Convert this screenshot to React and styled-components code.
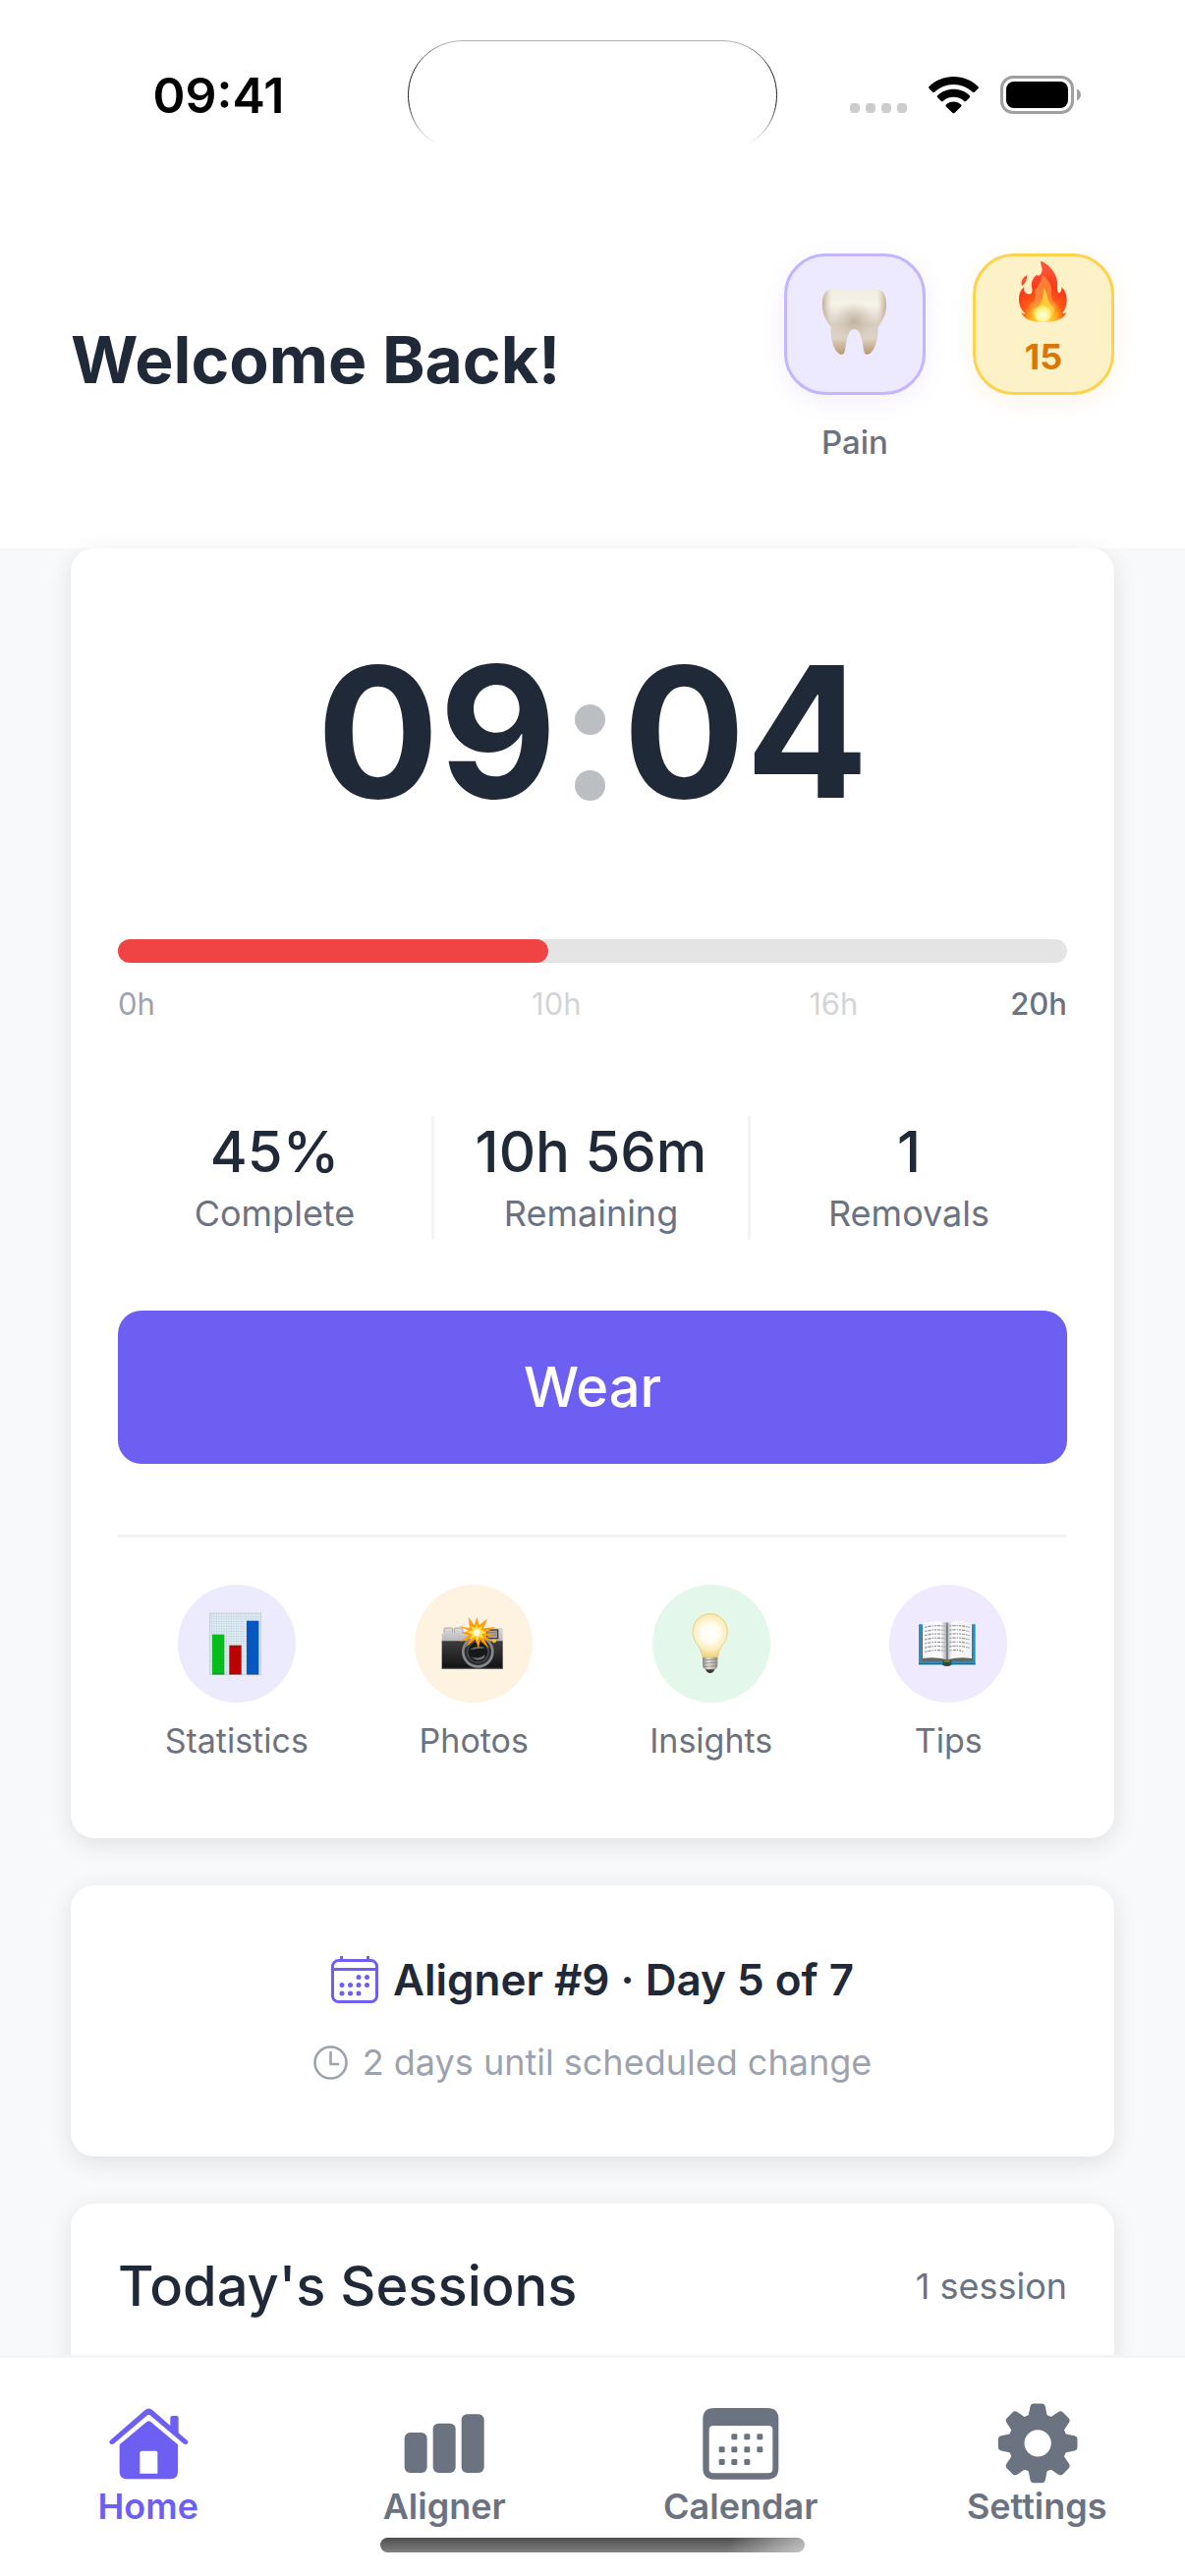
import React from "react";
import styled, { createGlobalStyle } from "styled-components";

const color = {
  ink: "#1f2937",
  slate: "#6b7280",
  mute: "#9ca3af",
  faint: "#d4d4d4",
  line: "#f3f4f6",
  page: "#f8f9fb",
  brand: "#6c5ff2",
};

const GlobalStyle = createGlobalStyle`
  *, *::before, *::after { box-sizing: border-box; }
  body {
    margin: 0;
    font-family: Inter, "Liberation Sans", sans-serif;
    color: ${color.ink};
    background: ${color.page};
  }
  h1, h2, p { margin: 0; }
  button { font: inherit; border: 0; cursor: pointer; }
  svg { display: block; flex: none; }
`;

const Screen = styled.div`
  display: flex;
  flex-direction: column;
  height: 100vh;
  background: ${color.page};
`;

const Content = styled.main`
  flex: 1;
  min-height: 0;
  overflow: hidden;
`;

/* Status bar */
const StatusBar = styled.div`
  display: grid;
  grid-template-columns: 1fr 376px 1fr;
  align-items: center;
  padding: 41px 0 34px;
  background: #ffffff;
`;

const Clock = styled.time`
  padding-left: 30px;
  text-align: center;
  font-size: 50px;
  line-height: 60px;
  font-weight: 600;
  color: #000000;
`;

const Indicators = styled.div`
  display: flex;
  justify-content: center;
  align-items: flex-end;
  gap: 22px;
  padding-right: 32px;
`;

/* Header */
const Header = styled.header`
  display: flex;
  align-items: center;
  justify-content: space-between;
  padding: 72px 72px 84px;
  background: #ffffff;
`;

const Title = styled.h1`
  font-size: 66px;
  line-height: 84px;
  font-weight: 700;
`;

const HeaderActions = styled.div`
  display: flex;
  align-items: flex-start;
  gap: 48px;
`;

const BadgeColumn = styled.div`
  display: flex;
  flex-direction: column;
  align-items: center;
  gap: 24px;
`;

const BadgeButton = styled.button`
  display: flex;
  flex-direction: column;
  align-items: center;
  justify-content: ${(p) => (p.$stacked ? "flex-start" : "center")};
  gap: 10px;
  width: 144px;
  height: 144px;
  padding: 0;
  border: 3px solid ${(p) => p.$edge};
  border-radius: 42px;
  background: ${(p) => p.$fill};
  box-shadow: 0 6px 24px ${(p) => p.$glow};
`;

const BadgeCount = styled.span`
  font-size: 36px;
  line-height: 48px;
  font-weight: 700;
  color: #d97706;
`;

const BadgeLabel = styled.label`
  font-size: 33px;
  line-height: 48px;
  font-weight: 500;
  color: ${color.slate};
`;

/* Cards */
const Stack = styled.div`
  display: flex;
  flex-direction: column;
  gap: 48px;
  padding: 0 72px;
`;

const Card = styled.section`
  padding: ${(p) => p.$pad || "48px"};
  border-radius: 24px;
  background: #ffffff;
  box-shadow: 0 6px 24px rgba(0, 0, 0, 0.1);
`;

const Timer = styled.div`
  display: flex;
  justify-content: center;
  align-items: center;
  gap: 18px;
  padding: 24px 0 96px;
  font-size: 185px;
  line-height: 230px;
  font-weight: 700;
`;

const Colon = styled.span`
  display: flex;
  flex-direction: column;
  gap: 36px;
  padding-top: 42px;
`;

const ColonDot = styled.i`
  width: 31px;
  height: 31px;
  border-radius: 50%;
  background: #bbbfc4;
`;

const Track = styled.div`
  height: 24px;
  border-radius: 12px;
  background: #e4e4e4;
`;

const Fill = styled.div`
  height: 100%;
  border-radius: 12px;
  background: #f04444;
`;

const Scale = styled.div`
  display: grid;
  grid-template-columns: 421fr 282fr 205fr auto;
  margin-top: 24px;
  font-size: 31px;
  line-height: 36px;
`;

const Tick = styled.span`
  font-weight: ${(p) => (p.$strong ? 500 : 400)};
  color: ${(p) => p.$tone};
`;

const Stats = styled.div`
  display: grid;
  grid-template-columns: repeat(3, 1fr);
  margin-top: 96px;
`;

const Stat = styled.div`
  text-align: center;
  &:not(:last-child) { border-right: 3px solid ${color.line}; }
`;

const StatValue = styled.div`
  font-size: 58px;
  line-height: 72px;
  font-weight: 500;
`;

const StatLabel = styled.div`
  font-size: 36px;
  line-height: 54px;
  color: ${color.slate};
`;

const WearButton = styled.button`
  display: block;
  width: 100%;
  margin-top: 72px;
  padding: 42px;
  border-radius: 24px;
  background: ${color.brand};
  color: #ffffff;
  && { font-size: 56px; line-height: 72px; font-weight: 500; }
`;

const Shortcuts = styled.nav`
  display: grid;
  grid-template-columns: repeat(4, 1fr);
  margin-top: 72px;
  padding: 48px 0 24px;
  border-top: 3px solid ${color.line};
`;

const Shortcut = styled.a`
  display: flex;
  flex-direction: column;
  align-items: center;
  gap: 12px;
  color: ${color.slate};
  font-size: 34px;
  line-height: 54px;
  text-decoration: none;
`;

const Disc = styled.span`
  display: grid;
  place-items: center;
  width: 120px;
  height: 120px;
  border-radius: 50%;
  background: ${(p) => p.$fill};
`;

const AlignerTitle = styled.h2`
  display: flex;
  justify-content: center;
  align-items: center;
  gap: 15px;
  font-size: 44px;
  line-height: 60px;
  font-weight: 600;
`;

const AlignerNote = styled.p`
  display: flex;
  justify-content: center;
  align-items: center;
  gap: 15px;
  margin-top: 24px;
  font-size: 36px;
  line-height: 60px;
  color: ${color.mute};
`;

const SessionsHead = styled.div`
  display: flex;
  justify-content: space-between;
  align-items: center;
`;

const SessionsTitle = styled.h2`
  font-size: 56px;
  line-height: 72px;
  font-weight: 500;
`;

const SessionsCount = styled.span`
  font-size: 36px;
  line-height: 48px;
  color: ${color.slate};
`;

/* Tab bar */
const TabBar = styled.footer`
  border-top: 3px solid ${color.line};
  padding: 45px 0 24px;
  background: #ffffff;
`;

const Tabs = styled.nav`
  display: grid;
  grid-template-columns: repeat(4, 1fr);
`;

const Tab = styled.a`
  display: flex;
  flex-direction: column;
  align-items: center;
  font-size: 36px;
  line-height: 44px;
  font-weight: 600;
  text-decoration: none;
  color: ${(p) => (p.$active ? color.brand : color.slate)};
`;

const HomeIndicator = styled.div`
  width: 432px;
  height: 15px;
  margin: 10px auto 0;
  border-radius: 8px;
  background:
    linear-gradient(100deg, rgba(255, 255, 255, 0) 82%, rgba(255, 255, 255, 0.55) 100%),
    linear-gradient(#4d4f4e, #808080);
`;

/* Drawings */
const Island = () => (
  <svg width="376" height="111" viewBox="0 0 376 111" fill="none" aria-hidden="true">
    <defs>
      <linearGradient id="islandEdge" x1="0" y1="0" x2="0" y2="111" gradientUnits="userSpaceOnUse">
        <stop offset="0" stopColor="#b5b5b5" />
        <stop offset="0.06" stopColor="#9a9a9a" />
        <stop offset="0.25" stopColor="#222" />
        <stop offset="0.6" stopColor="#222" />
        <stop offset="0.95" stopColor="#fff" />
      </linearGradient>
    </defs>
    <path
      d="M30 105 C12 97 .5 78 .5 55.500 C.5 25 25 .5 56 .5 H320 C351 .5 375.500 25 375.500 55.500 C375.500 78 364 97 346 105"
      stroke="url(#islandEdge)"
    />
  </svg>
);

const SignalDots = () => (
  <svg width="58" height="12" viewBox="0 0 58 12" fill="#cccccc" aria-hidden="true">
    {[0, 16, 32, 48].map((x) => (
      <rect key={x} x={x} y="1" width="10" height="10" rx="4" />
    ))}
  </svg>
);

const Wifi = () => (
  <svg width="51" height="38" viewBox="0 0 51 38" fill="#000" aria-hidden="true">
    <path d="M25.500 0C35.200 0 44 3.800 50.400 10c.6.600.6 1.400.1 2l-3.700 3.700c-.5.500-1.300.5-1.900 0C39.700 10.900 32.900 8 25.500 8S11.300 10.900 6.100 15.700c-.6.500-1.400.5-1.900 0L.5 12c-.5-.6-.5-1.400.1-2C7 3.800 15.800 0 25.500 0Z" />
    <path d="M25.500 12.800c6.300 0 12 2.400 16.300 6.400.6.500.6 1.400 0 2l-3.700 3.700c-.5.500-1.300.5-1.900 0-2.800-2.600-6.600-4.100-10.700-4.100s-7.900 1.500-10.700 4.100c-.6.500-1.400.5-1.900 0l-3.700-3.700c-.6-.6-.6-1.500 0-2 4.300-4 10-6.400 16.300-6.400Z" />
    <path d="M25.500 25.600c2.900 0 5.600 1.100 7.600 2.900.6.500.6 1.400 0 2l-6.600 6.600c-.6.600-1.500.6-2 0l-6.600-6.600c-.6-.6-.6-1.500 0-2 2-1.800 4.700-2.900 7.600-2.900Z" />
  </svg>
);

const Battery = () => (
  <svg width="82" height="39" viewBox="0 0 82 39" aria-hidden="true">
    <rect x="1.500" y="1.500" width="72" height="36" rx="11.500" fill="none" stroke="#a0a0a0" strokeWidth="3" />
    <rect x="6" y="6" width="63" height="27" rx="8" fill="#000" />
    <path d="M78 13.500c2.600 1.200 4 3.500 4 6s-1.400 4.800-4 6Z" fill="#a0a0a0" />
  </svg>
);

const Tooth = () => (
  <svg width="72" height="72" viewBox="222 192 216 216" aria-hidden="true">
    <defs>
      <linearGradient id="enamel" x1="0" y1="192" x2="0" y2="393" gradientUnits="userSpaceOnUse">
        <stop offset="0" stopColor="#efece0" />
        <stop offset="0.25" stopColor="#f5f2e8" />
        <stop offset="0.55" stopColor="#d8cdbf" />
        <stop offset="0.75" stopColor="#dcd3c4" />
        <stop offset="1" stopColor="#b8966f" />
      </linearGradient>
      <radialGradient id="toothShade" cx="328" cy="290" r="60" gradientUnits="userSpaceOnUse">
        <stop offset="0" stopColor="#b9a892" stopOpacity="0.75" />
        <stop offset="1" stopColor="#cbbfae" stopOpacity="0" />
      </radialGradient>
      <linearGradient id="toothSide" x1="231" y1="0" x2="426" y2="0" gradientUnits="userSpaceOnUse">
        <stop offset="0" stopColor="#a98f6c" stopOpacity="0.7" />
        <stop offset="0.14" stopColor="#c9b99f" stopOpacity="0" />
        <stop offset="0.86" stopColor="#c9b99f" stopOpacity="0" />
        <stop offset="1" stopColor="#a98f6c" stopOpacity="0.7" />
      </linearGradient>
    </defs>
    {["url(#enamel)", "url(#toothShade)", "url(#toothSide)"].map((paint) => (
      <path
        key={paint}
        fill={paint}
        d="M231 240C231 212 240 192 262 192C290 192 304 199 328 199C352 199 366 192 394 192C417 192 426 212 426 240C426 268 416 288 401 308C402 345 391 385 370 392C357 396 357 378 354 360C350 333 341 315 328 315C315 315 307 333 303 360C300 378 300 396 287 392C266 385 255 345 257 308C241 288 231 268 231 240Z"
      />
    ))}
  </svg>
);

const Flame = () => (
  <svg width="72" height="68" viewBox="798 93 216 204" aria-hidden="true">
    <defs>
      <radialGradient id="blaze" cx="905" cy="282" r="150" gradientUnits="userSpaceOnUse">
        <stop offset="0" stopColor="#ffe95a" />
        <stop offset="0.26" stopColor="#ffb01c" />
        <stop offset="0.42" stopColor="#ff5a14" />
        <stop offset="0.65" stopColor="#f93a1a" />
        <stop offset="1" stopColor="#ff5238" />
      </radialGradient>
      <radialGradient id="blazeCore" cx="904" cy="272" r="48" gradientUnits="userSpaceOnUse">
        <stop offset="0" stopColor="#ffffe8" />
        <stop offset="0.4" stopColor="#fff58c" />
        <stop offset="1" stopColor="#ffe030" stopOpacity="0" />
      </radialGradient>
    </defs>
    <path
      fill="url(#blaze)"
      d="M898 107C924 118 947 144 948 172C949 184 946 194 950 202C955 210 963 198 961 187C971 194 977 210 977 228C977 243 972 256 964 266C968 268 972 266 976 264C970 283 944 294 905 294C868 294 845 284 838 264C842 267 846 269 850 268C838 256 831 243 831 225C831 208 836 194 847 187C845 200 851 208 862 208C872 208 873 198 870 185C867 168 878 156 884 150C894 155 904 146 901 128C899 118 896 112 898 107Z"
    />
    <path fill="#ff9440" d="M902 150C918 160 934 180 930 206C928 220 934 232 944 238C946 262 930 282 905 284C880 284 862 266 866 238C876 236 884 224 880 204C878 188 900 178 902 150Z" opacity="0.75" />
    <path fill="#ffd23a" d="M906 190C920 205 917 226 928 240C944 246 940 268 928 280C914 290 890 290 878 278C866 264 872 250 884 250C900 246 906 215 906 190Z" opacity="0.85" />
    <circle cx="904" cy="268" r="26" fill="url(#blazeCore)" />
    <path fill="#f9532e" d="M855 150C857 165 850 176 840 183C835 170 843 157 855 150Z" />
  </svg>
);

const ChartEmoji = () => (
  <svg width="72" height="72" viewBox="165 111 216 216" aria-hidden="true">
    <defs>
      <pattern id="graph" width="7.500" height="7.500" patternUnits="userSpaceOnUse">
        <rect width="7.500" height="7.500" fill="#e2eef6" />
        <path d="M0 0H7.500M0 0V7.500" stroke="#b9cbd8" strokeWidth="2.400" />
      </pattern>
    </defs>
    <rect x="190" y="126" width="157" height="187" fill="url(#graph)" stroke="#c0c6ce" strokeWidth="2" />
    <rect x="198" y="191" width="37" height="122" fill="#06bd1c" />
    <rect x="250" y="224" width="37" height="89" fill="#bb0203" />
    <rect x="303" y="149" width="37" height="164" fill="#0657c4" />
    <path d="M198 312h37M250 312h37M303 312h37" stroke="#33373d" strokeOpacity="0.5" strokeWidth="3" />
  </svg>
);

const CameraEmoji = () => (
  <svg width="72" height="72" viewBox="891 111 216 216" aria-hidden="true">
    <defs>
      <linearGradient id="chrome" x1="0" y1="171" x2="0" y2="214" gradientUnits="userSpaceOnUse">
        <stop offset="0" stopColor="#dcdcdc" />
        <stop offset="1" stopColor="#b4b4b4" />
      </linearGradient>
      <linearGradient id="leather" x1="0" y1="210" x2="0" y2="297" gradientUnits="userSpaceOnUse">
        <stop offset="0" stopColor="#3d3d3d" />
        <stop offset="1" stopColor="#121212" />
      </linearGradient>
    </defs>
    <rect x="909" y="171" width="26" height="20" rx="3" fill="url(#chrome)" stroke="#8b8b8b" strokeWidth="2" />
    <rect x="940" y="171" width="26" height="20" rx="3" fill="url(#chrome)" stroke="#8b8b8b" strokeWidth="2" />
    <path d="M902 192q0-5 5-5h80l10-16h91v43H902Z" fill="url(#chrome)" />
    <path d="M902 211h186v86H902Z" fill="url(#leather)" />
    <path d="M902 295h186" stroke="#777" strokeWidth="3" />
    <rect x="1040" y="177" width="33" height="26" fill="#a9a29c" stroke="#3b3b3b" strokeWidth="4" />
    <path d="M1043 185h27M1043 193h27" stroke="#736c67" strokeWidth="2" />
    <circle cx="1012" cy="244" r="45" fill="#2b2c2e" stroke="#85888c" strokeWidth="8" />
    <circle cx="1012" cy="244" r="32" fill="#17181a" stroke="#4b4d50" strokeWidth="4" />
    <path d="M986 238q24-16 50-6q-22 2-50 6ZM990 258q24 12 44-6l-2 10q-20 16-42-4Z" fill="#707377" />
    <circle cx="1062" cy="211" r="6" fill="#f2c21b" />
    <path
      fill="#ff9d0a"
      d="M1008 184L983 137L1001 163L1009 138L1016 162L1041 143L1029 172L1066 168L1034 186L1066 192L1034 196L1058 214L1030 205L1047 235L1019 208L1014 233L1004 206L973 231L991 203L956 213L984 194L962 185L986 180L953 165L987 172L983 137Z"
    />
    <path
      fill="#ffe14a"
      d="M1008 160L1014 172L1026 164L1023 177L1040 185L1023 190L1032 204L1016 198L1010 212L1004 198L986 206L995 191L980 184L996 178L990 164L1004 172Z"
    />
    <circle cx="1009" cy="185" r="10" fill="#fffbe0" />
  </svg>
);

const BulbEmoji = () => (
  <svg width="72" height="72" viewBox="144 111 216 216" aria-hidden="true">
    <defs>
      <radialGradient id="glass" cx="248" cy="187" r="72" gradientUnits="userSpaceOnUse">
        <stop offset="0" stopColor="#ffffff" />
        <stop offset="0.4" stopColor="#fffcf0" />
        <stop offset="0.72" stopColor="#fbecb8" />
        <stop offset="1" stopColor="#f1d37a" />
      </radialGradient>
      <linearGradient id="screw" x1="225" y1="0" x2="271" y2="0" gradientUnits="userSpaceOnUse">
        <stop offset="0" stopColor="#8f8a84" />
        <stop offset="0.4" stopColor="#e4e1dd" />
        <stop offset="1" stopColor="#8f8a84" />
      </linearGradient>
    </defs>
    <path
      fill="url(#glass)"
      stroke="#efd07a"
      strokeWidth="3"
      d="M248 128C278 128 301 152 301 182C301 204 291 215 283 227C275 240 273 250 271 260H225C223 250 221 240 213 227C205 215 195 204 195 182C195 152 218 128 248 128Z"
    />
    <path fill="url(#screw)" d="M225 260H271V286C271 294 264 298 258 300H238C232 298 225 294 225 286Z" />
    <path d="M226 270L270 266M226 280L270 276M228 290L269 286" stroke="#86817b" strokeWidth="2" />
    <path d="M233 298H263L257 305Q248 313 239 305Z" fill="#3c3a38" />
  </svg>
);

const BookEmoji = () => (
  <svg width="72" height="72" viewBox="870 111 216 216" aria-hidden="true">
    <defs>
      <linearGradient id="pageLeft" x1="900" y1="0" x2="974" y2="0" gradientUnits="userSpaceOnUse">
        <stop offset="0" stopColor="#f4f4f8" />
        <stop offset="0.75" stopColor="#ffffff" />
        <stop offset="1" stopColor="#a9a9ad" />
      </linearGradient>
      <linearGradient id="pageRight" x1="976" y1="0" x2="1052" y2="0" gradientUnits="userSpaceOnUse">
        <stop offset="0" stopColor="#bdbdc1" />
        <stop offset="0.2" stopColor="#ffffff" />
        <stop offset="1" stopColor="#f0f0f4" />
      </linearGradient>
    </defs>
    <path d="M888 160H1061V283H990Q974 292 958 283H888Z" fill="#2a8fbd" />
    <path d="M888 281H958Q974 290 990 281H1061" fill="none" stroke="#1c6a90" strokeWidth="4" />
    <path d="M897 158L904 262H1045L1053 158V272H985Q974 280 963 272H897Z" fill="#66645f" />
    <path d="M900 157Q940 145 974 155V268Q940 258 900 264Z" fill="url(#pageLeft)" />
    <path d="M976 155Q1010 145 1050 157V264Q1010 258 976 268Z" fill="url(#pageRight)" />
    <path d="M975 154V270" stroke="#5e5e60" strokeWidth="3" />
    <path d="M960 270H989L985 284Q974 290 964 284Z" fill="#2b4a38" />
    <path d="M965 273H984" stroke="#b3a32c" strokeWidth="3" />
    {[0, 1, 2, 3, 4, 5, 6].map((row) => (
      <path
        key={row}
        d={`M907 ${169 + row * 12.5}Q938 ${161 + row * 12.5} 967 ${166 + row * 12.5}M982 ${165 + row * 12.5}Q1012 ${161 + row * 12.5} ${row === 6 ? 1024 : 1043} ${169 + row * 12.5}`}
        fill="none"
        stroke="#8f8f98"
        strokeWidth="3.500"
        strokeDasharray="6 3 10 3 4 3"
      />
    ))}
  </svg>
);

const CalendarOutline = () => (
  <svg width="48" height="48" viewBox="0 0 48 48" fill="none" stroke={color.brand} strokeWidth="3" aria-hidden="true">
    <rect x="1.500" y="4.500" width="45" height="42" rx="6" />
    <path d="M1.500 13.500H46.500M10.500 0V5M37.500 0V5" />
    {[
      [28, 21.5], [36.5, 21.5],
      [11, 29.5], [19.5, 29.5], [28, 29.5], [36.5, 29.5],
      [11, 38], [19.5, 38], [28, 38],
    ].map(([x, y]) => (
      <circle key={`${x}-${y}`} cx={x} cy={y} r="2.500" fill={color.brand} stroke="none" />
    ))}
  </svg>
);

const ClockOutline = () => (
  <svg width="35" height="35" viewBox="0 0 35 35" fill="none" stroke={color.mute} strokeWidth="2.600" strokeLinecap="round" strokeLinejoin="round" aria-hidden="true">
    <circle cx="17.500" cy="17.500" r="16" />
    <path d="M17.500 7V19H25" />
  </svg>
);

const HomeIcon = () => (
  <svg width="84" height="84" viewBox="146 134 252 252" fill="currentColor" aria-hidden="true">
    <path d="M339 206V182Q339 176 345 176H358Q364 176 364 182V228L390 250Q396 256 391 261Q386 266 379 261L277 174Q273 170 269 174L167 261Q160 266 155 261Q150 256 156 250L262 158Q273 149 284 158Z" />
    <path
      fillRule="evenodd"
      d="M184 264L267 194Q273 190 279 194L362 264V347Q362 369 340 369H206Q184 369 184 347ZM246 289V352H300V289Q300 283 294 283H252Q246 283 246 289Z"
    />
  </svg>
);

const AlignerIcon = () => (
  <svg width="84" height="84" viewBox="1051 134 252 252" fill="currentColor" aria-hidden="true">
    <rect x="1056" y="227" width="69" height="123" rx="17" />
    <rect x="1143" y="199" width="69" height="151" rx="17" />
    <rect x="1230" y="171" width="69" height="179" rx="17" />
  </svg>
);

const CalendarIcon = () => (
  <svg width="84" height="84" viewBox="215 134 252 252" fill="currentColor" aria-hidden="true">
    <path
      fillRule="evenodd"
      d="M259 152H422Q456 152 456 186V336Q456 370 422 370H259Q225 370 225 336V186Q225 152 259 152ZM257 206Q244 206 244 219V338Q244 351 257 351H425Q438 351 438 338V219Q438 206 425 206Z"
    />
    {[
      [321, 240], [360, 240], [399, 240],
      [283, 279], [321, 279], [360, 279], [399, 279],
      [283, 317], [321, 317], [360, 317],
    ].map(([x, y]) => (
      <rect key={`${x}-${y}`} x={x - 9} y={y - 9} width="18" height="18" rx="4" />
    ))}
  </svg>
);

const GearIcon = () => (
  <svg width="84" height="84" viewBox="1120 134 252 252" fill="currentColor" aria-hidden="true">
    <g transform="translate(1249.500 259.500)">
      <path fillRule="evenodd" d="M0-90A90 90 0 1 1 0 90A90 90 0 1 1 0-90ZM0-41A41 41 0 1 0 0 41A41 41 0 1 0 0-41Z" />
      {[0, 45, 90, 135, 180, 225, 270, 315].map((turn) => (
        <path key={turn} transform={`rotate(${turn})`} d="M-32-80L-28-87L-23-112Q-21-121-12-121H12Q21-121 23-112L28-87L32-80Z" />
      ))}
    </g>
  </svg>
);

const stats = [
  { value: "45%", label: "Complete" },
  { value: "10h 56m", label: "Remaining" },
  { value: "1", label: "Removals" },
];

const ticks = [
  { text: "0h", tone: color.mute },
  { text: "10h", tone: color.faint },
  { text: "16h", tone: color.faint },
  { text: "20h", tone: color.slate, strong: true },
];

const shortcuts = [
  { label: "Statistics", fill: "#eceafd", Icon: ChartEmoji },
  { label: "Photos", fill: "#fef2e1", Icon: CameraEmoji },
  { label: "Insights", fill: "#e3f7eb", Icon: BulbEmoji },
  { label: "Tips", fill: "#f0eafe", Icon: BookEmoji },
];

const tabs = [
  { label: "Home", Icon: HomeIcon, active: true },
  { label: "Aligner", Icon: AlignerIcon },
  { label: "Calendar", Icon: CalendarIcon },
  { label: "Settings", Icon: GearIcon },
];

const progress = 9.07 / 20;

export default function App() {
  return (
    <Screen>
      <GlobalStyle />
      <Content>
        <StatusBar>
          <Clock>09:41</Clock>
          <Island />
          <Indicators>
            <SignalDots />
            <Wifi />
            <Battery />
          </Indicators>
        </StatusBar>

        <Header>
          <Title>Welcome Back!</Title>
          <HeaderActions>
            <BadgeColumn>
              <BadgeButton id="pain" $edge="#c4b5fd" $fill="#ede9fe" $glow="rgba(139, 92, 246, 0.1)">
                <Tooth />
              </BadgeButton>
              <BadgeLabel htmlFor="pain">Pain</BadgeLabel>
            </BadgeColumn>
            <BadgeButton $stacked $edge="#fcd34d" $fill="#fdf2c7" $glow="rgba(245, 158, 11, 0.1)">
              <Flame />
              <BadgeCount>15</BadgeCount>
            </BadgeButton>
          </HeaderActions>
        </Header>

        <Stack>
          <Card>
            <Timer>
              <span>09</span>
              <Colon>
                <ColonDot />
                <ColonDot />
              </Colon>
              <span>04</span>
            </Timer>
            <Track>
              <Fill style={{ width: `${progress * 100}%` }} />
            </Track>
            <Scale>
              {ticks.map((t) => (
                <Tick key={t.text} $tone={t.tone} $strong={t.strong}>
                  {t.text}
                </Tick>
              ))}
            </Scale>
            <Stats>
              {stats.map((s) => (
                <Stat key={s.label}>
                  <StatValue>{s.value}</StatValue>
                  <StatLabel>{s.label}</StatLabel>
                </Stat>
              ))}
            </Stats>
            <WearButton>Wear</WearButton>
            <Shortcuts>
              {shortcuts.map(({ label, fill, Icon }) => (
                <Shortcut key={label} href="#">
                  <Disc $fill={fill}>
                    <Icon />
                  </Disc>
                  {label}
                </Shortcut>
              ))}
            </Shortcuts>
          </Card>

          <Card $pad="66px 48px">
            <AlignerTitle>
              <CalendarOutline />
              Aligner #9 · Day 5 of 7
            </AlignerTitle>
            <AlignerNote>
              <ClockOutline />2 days until scheduled change
            </AlignerNote>
          </Card>

          <Card $pad="48px 48px 96px">
            <SessionsHead>
              <SessionsTitle>Today's Sessions</SessionsTitle>
              <SessionsCount>1 session</SessionsCount>
            </SessionsHead>
          </Card>
        </Stack>
      </Content>

      <TabBar>
        <Tabs>
          {tabs.map(({ label, Icon, active }) => (
            <Tab key={label} href="#" $active={active}>
              <Icon />
              {label}
            </Tab>
          ))}
        </Tabs>
        <HomeIndicator />
      </TabBar>
    </Screen>
  );
}
